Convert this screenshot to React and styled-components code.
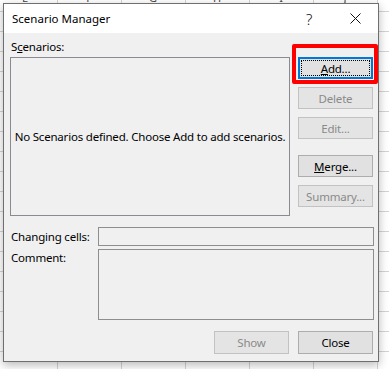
import React from "react";
import styled, { createGlobalStyle } from "styled-components";

const GlobalStyle = createGlobalStyle`
  html, body {
    margin: 0;
    padding: 0;
  }
  body {
    width: 389px;
    height: 369px;
    overflow: hidden;
    font-family: "Noto Sans", "Open Sans", sans-serif;
    background-color: #ffffff;
    background-image:
      linear-gradient(to right, #d4d4d4 1px, transparent 1px),
      linear-gradient(to bottom, #d4d4d4 1px, transparent 1px);
    background-size: 64px 100%, 100% 20px;
    background-position: 57px 0, 0 11px;
  }
`;

const Sheet = styled.div`
  display: flex;
  flex-direction: column;
`;

const ColumnStrip = styled.div`
  display: flex;
  height: 3px;
  overflow: hidden;
  margin-left: -7px;
`;

const ColumnCell = styled.div`
  width: 64px;
  flex: none;
  text-align: center;
  font-size: 11px;
  line-height: 14px;
  margin-top: -9px;
  color: #444;
`;

const Dialog = styled.div`
  position: relative;
  width: 376px;
  height: 359px;
  box-sizing: border-box;
  margin-left: 3px;
  background: #f0f0f0;
  border: 1px solid #6f6f6f;
  box-shadow: 0 3px 9px rgba(0, 0, 0, 0.28);
  display: flex;
  flex-direction: column;
  font-size: 11.5px;
  letter-spacing: -0.2px;
  color: #000;
`;

const TitleBar = styled.div`
  height: 29px;
  background: #fff;
  display: flex;
  align-items: center;
  padding-left: 8px;
`;

const Title = styled.div`
  flex: 1;
  font-size: 11.5px;
  letter-spacing: 0;
`;

const CaptionButton = styled.div`
  width: 46px;
  height: 29px;
  display: flex;
  align-items: center;
  justify-content: center;
  font-size: 15px;
  font-weight: 300;
  color: #111;
`;

const Body = styled.div`
  flex: 1;
  display: flex;
  flex-direction: column;
  padding: 0 5px 7px 6px;
`;

const GroupLabel = styled.div`
  height: 24px;
  box-sizing: border-box;
  padding: 6px 0 0 1px;
  line-height: 16px;
`;

const TopRow = styled.div`
  display: flex;
  gap: 8px;
`;

const ListBox = styled.div`
  flex: 1;
  height: 159px;
  box-sizing: border-box;
  border: 1px solid #8a8a90;
  display: flex;
  align-items: center;
  justify-content: center;
  white-space: nowrap;
`;

const ButtonColumn = styled.div`
  width: 75px;
  display: flex;
  flex-direction: column;
  gap: 8px;
`;

const Button = styled.div`
  width: 75px;
  height: ${({ $tall }) => ($tall ? 23 : 22)}px;
  box-sizing: border-box;
  margin-top: ${({ $spaced }) => ($spaced ? 8 : 0)}px;
  background: ${({ $disabled }) => ($disabled ? "#e4e4e4" : "#e1e1e1")};
  border: ${({ $focused }) => ($focused ? "2px solid #0078d7" : "1px solid #adadad")};
  border-color: ${({ $disabled, $focused }) =>
    $focused ? "#0078d7" : $disabled ? "#c2c2c2" : "#adadad"};
  color: ${({ $disabled }) => ($disabled ? "#8a8a8a" : "#000")};
  display: flex;
  align-items: center;
  justify-content: center;
  padding: ${({ $focused }) => ($focused ? "1px" : "0")};
`;

const FocusRing = styled.div`
  flex: 1;
  align-self: stretch;
  border: 1px dotted #000;
  display: flex;
  align-items: center;
  justify-content: center;
`;

const Highlight = styled.div`
  position: absolute;
  left: 288px;
  top: 40px;
  width: 86px;
  height: 40px;
  box-sizing: border-box;
  border: 4px solid #ff0000;
  border-radius: 2px;
  pointer-events: none;
`;

const FieldRow = styled.div`
  display: grid;
  grid-template-columns: 88px 1fr;
  align-items: ${({ $top }) => ($top ? "start" : "center")};
  margin-top: ${({ $gap }) => $gap}px;
`;

const FieldLabel = styled.div`
  padding-left: 1px;
  line-height: 16px;
  padding-top: ${({ $top }) => ($top ? 1 : 0)}px;
`;

const Field = styled.div`
  height: ${({ $h }) => $h}px;
  box-sizing: border-box;
  border: 1px solid #8e8e8e;
  margin-right: -1px;
`;

const Footer = styled.div`
  display: flex;
  justify-content: flex-end;
  gap: 9px;
  margin-top: 11px;
`;

const CloseIcon = () => (
  <svg width="11" height="11" viewBox="0 0 11 11">
    <path d="M0.5 0.5 L10.5 10.5 M10.5 0.5 L0.5 10.5" stroke="#111" strokeWidth="1" />
  </svg>
);

export default function App() {
  return (
    <Sheet>
      <GlobalStyle />
      <ColumnStrip>
        {["E", "F", "G", "H", "I", "J"].map((c) => (
          <ColumnCell key={c}>{c}</ColumnCell>
        ))}
      </ColumnStrip>
      <Dialog>
        <TitleBar>
          <Title>Scenario Manager</Title>
          <CaptionButton>?</CaptionButton>
          <CaptionButton>
            <CloseIcon />
          </CaptionButton>
        </TitleBar>
        <Body>
          <GroupLabel>
            S<u>c</u>enarios:
          </GroupLabel>
          <TopRow>
            <ListBox>No Scenarios defined. Choose Add to add scenarios.</ListBox>
            <ButtonColumn>
              <Button $focused>
                <FocusRing>
                  <u>A</u>dd...
                </FocusRing>
              </Button>
              <Button $disabled>Delete</Button>
              <Button $disabled>Edit...</Button>
              <Button $spaced>
                <span>
                  <u>M</u>erge...
                </span>
              </Button>
              <Button $disabled>Summary...</Button>
            </ButtonColumn>
          </TopRow>
          <FieldRow $gap={11}>
            <FieldLabel>Changing cells:</FieldLabel>
            <Field $h={19} />
          </FieldRow>
          <FieldRow $gap={3} $top>
            <FieldLabel $top>Comment:</FieldLabel>
            <Field $h={71} />
          </FieldRow>
          <Footer>
            <Button $tall $disabled>Show</Button>
            <Button $tall>Close</Button>
          </Footer>
        </Body>
        <Highlight />
      </Dialog>
    </Sheet>
  );
}
